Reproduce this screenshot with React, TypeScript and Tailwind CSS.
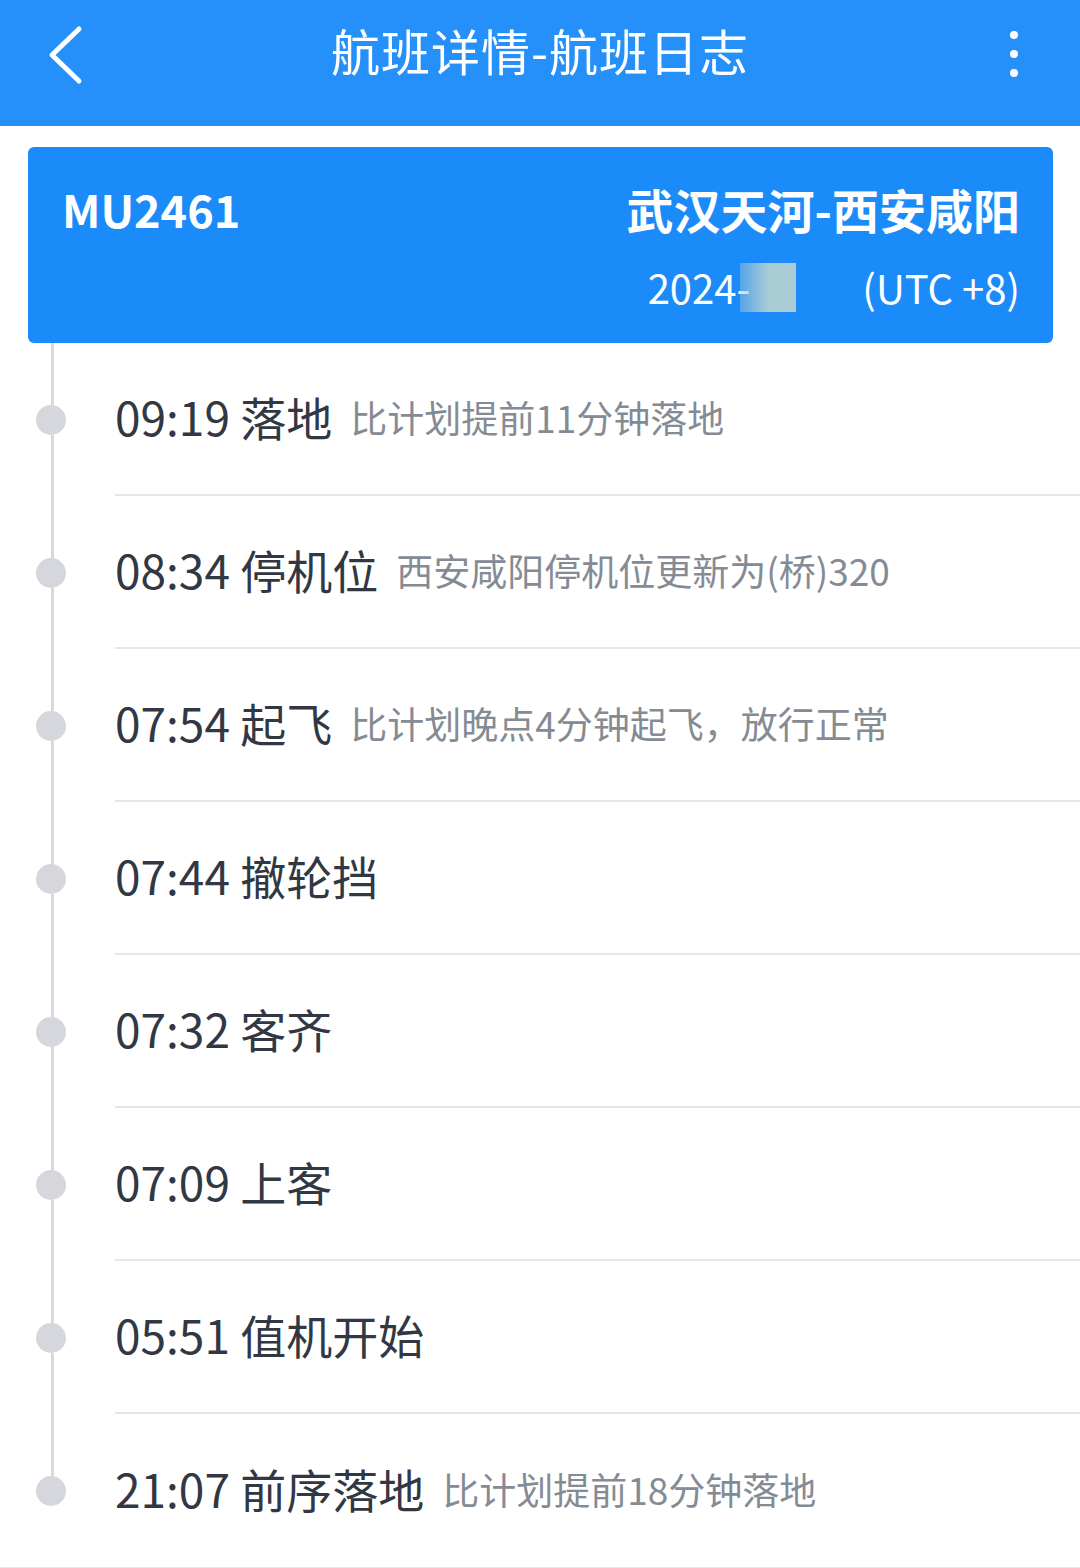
import React from "react";

type LogItem = { time: string; title: string; desc?: string };

const logs: LogItem[] = [
  { time: "09:19", title: "落地", desc: "比计划提前11分钟落地" },
  { time: "08:34", title: "停机位", desc: "西安咸阳停机位更新为(桥)320" },
  { time: "07:54", title: "起飞", desc: "比计划晚点4分钟起飞，放行正常" },
  { time: "07:44", title: "撤轮挡" },
  { time: "07:32", title: "客齐" },
  { time: "07:09", title: "上客" },
  { time: "05:51", title: "值机开始" },
  { time: "21:07", title: "前序落地", desc: "比计划提前18分钟落地" },
];

const font = { fontFamily: '"Noto Sans CJK SC", "Noto Sans", sans-serif' };

function Header() {
  return (
    <header className="relative flex h-[126px] items-center justify-center bg-[#2590fa] pb-[28px]">
      <button className="absolute left-[48px] top-[24px]" aria-label="返回">
        <svg width="36" height="62" viewBox="0 0 36 62" fill="none">
          <polyline points="31,5 4,31 31,57" stroke="white" strokeWidth="5" strokeLinecap="round" strokeLinejoin="round" />
        </svg>
      </button>
      <h1 className="text-[49px] leading-none tracking-[1px] text-white">航班详情-航班日志</h1>
      <div className="absolute right-[62px] top-[31px] flex flex-col items-center gap-[11px]">
        <span className="h-[8px] w-[8px] rounded-full bg-white" />
        <span className="h-[8px] w-[8px] rounded-full bg-white" />
        <span className="h-[8px] w-[8px] rounded-full bg-white" />
      </div>
    </header>
  );
}

function FlightCard() {
  return (
    <div className="mx-[28px] mr-[27px] mt-[21px] flex h-[196px] flex-col rounded-[6px] bg-[#1c8bfa] px-[34px] pr-[33px] pt-[26px] text-white">
      <div className="flex items-center justify-between leading-[72px]">
        <span className="text-[45px] font-bold">MU2461</span>
        <span className="text-[47px] font-bold">武汉天河-西安咸阳</span>
      </div>
      <div className="mt-[12px] flex items-center justify-end text-[40px] leading-[60px]">
        <span>2024-</span>
        <span className="ml-[-10px] h-[49px] w-[56px] bg-gradient-to-r from-[#a9cbd4]/40 via-[#a9cbd4] to-[#a9cbd4]" />
        <span className="w-[66px]" />
        <span>(UTC +8)</span>
      </div>
    </div>
  );
}

function LogRow({ item, last }: { item: LogItem; last: boolean }) {
  return (
    <div className="flex h-[153px]">
      <div className="flex w-[102px] flex-col items-center">
        <div className="ml-[3px] w-[3px] flex-1 bg-[#d8d9dd]" />
        <div className="h-[30px] w-[30px] shrink-0 rounded-full bg-[#d6d7dc]" />
        <div className={`ml-[3px] w-[3px] flex-1 ${last ? "bg-transparent" : "bg-[#d8d9dd]"}`} />
      </div>
      <div className={`ml-[13px] flex flex-1 items-center pb-[4px] ${last ? "" : "border-b-2 border-[#e6e6e8]"}`}>
        <span className="text-[46px] text-[#323843]">
          {item.time} {item.title}
        </span>
        {item.desc && <span className="ml-[18px] pt-[2px] text-[37px] text-[#858b94]">{item.desc}</span>}
      </div>
    </div>
  );
}

export default function App() {
  return (
    <div className="h-[1568px] w-[1080px] overflow-hidden bg-white" style={font}>
      <Header />
      <FlightCard />
      <div className="border-b-2 border-[#e6e6e8]">
        {logs.map((item, i) => (
          <LogRow key={item.time + item.title} item={item} last={i === logs.length - 1} />
        ))}
      </div>
    </div>
  );
}
